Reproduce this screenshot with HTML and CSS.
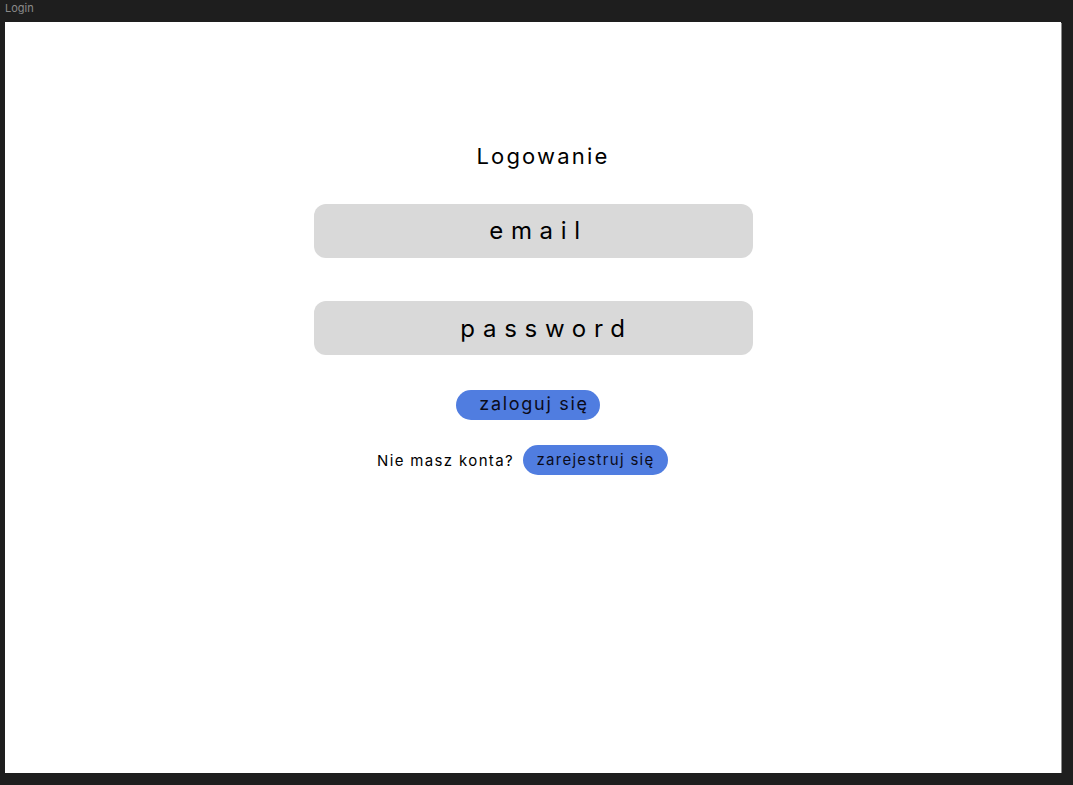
FILE: index.html
```html
<!DOCTYPE html>
<html lang="pl">
<head>
<meta charset="utf-8">
<title>Login</title>
<link rel="stylesheet" href="styles.css">
</head>
<body>
<div class="frame-label">Login</div>
<main class="frame">
  <h1 class="title">Logowanie</h1>
  <div class="field field-email">email</div>
  <div class="field field-password">password</div>
  <button class="btn btn-login">zaloguj się</button>
  <div class="register-row">
    <span class="register-text">Nie masz konta?</span>
    <button class="btn btn-register">zarejestruj się</button>
  </div>
</main>
</body>
</html>
```

FILE: styles.css
```css
html, body {
  margin: 0;
  padding: 0;
  background: #1e1e1e;
  font-family: Inter, "Liberation Sans", sans-serif;
}

.frame-label {
  height: 22px;
  padding-left: 5px;
  font-size: 11px;
  line-height: 16px;
  color: #8a8a8a;
}

.frame {
  margin-left: 5px;
  width: 1056px;
  height: 751px;
  background: #ffffff;
  box-shadow: 1px 1px 0 #8a8a8a;
  display: flex;
  flex-direction: column;
  align-items: center;
  box-sizing: border-box;
  padding-top: 121px;
}

.title {
  margin: 0;
  font-size: 22px;
  font-weight: 400;
  line-height: 26px;
  letter-spacing: 2.2px;
  color: #000;
  padding-left: 20px;
}

.field {
  width: 439px;
  height: 54px;
  border-radius: 12px;
  background: #d9d9d9;
  display: flex;
  align-items: center;
  justify-content: center;
  color: #000;
  font-size: 24px;
  letter-spacing: 7.7px;
  box-sizing: border-box;
}

.field-email {
  margin-top: 35px;
  padding-left: 11px;
  padding-bottom: 1px;
}

.field-password {
  margin-top: 43px;
  padding-left: 27px;
}

.btn {
  border: none;
  background: #507de0;
  color: #0b0b1a;
  font-family: Inter, "Liberation Sans", sans-serif;
  height: 30px;
  border-radius: 15px;
  padding: 0;
  display: flex;
  align-items: center;
  justify-content: center;
  box-sizing: border-box;
}

.btn-login {
  margin-top: 35px;
  width: 144px;
  font-size: 18px;
  letter-spacing: 1.7px;
  padding-left: 12px;
  margin-left: -10px;
  padding-bottom: 3px;
}

.register-row {
  margin-top: 25px;
  display: flex;
  align-items: center;
  gap: 9px;
  margin-left: -21px;
}

.register-text {
  font-size: 15px;
  letter-spacing: 1.35px;
  color: #000;
}

.btn-register {
  width: 145px;
  font-size: 15px;
  letter-spacing: 1.3px;
  padding-bottom: 2px;
}
```
